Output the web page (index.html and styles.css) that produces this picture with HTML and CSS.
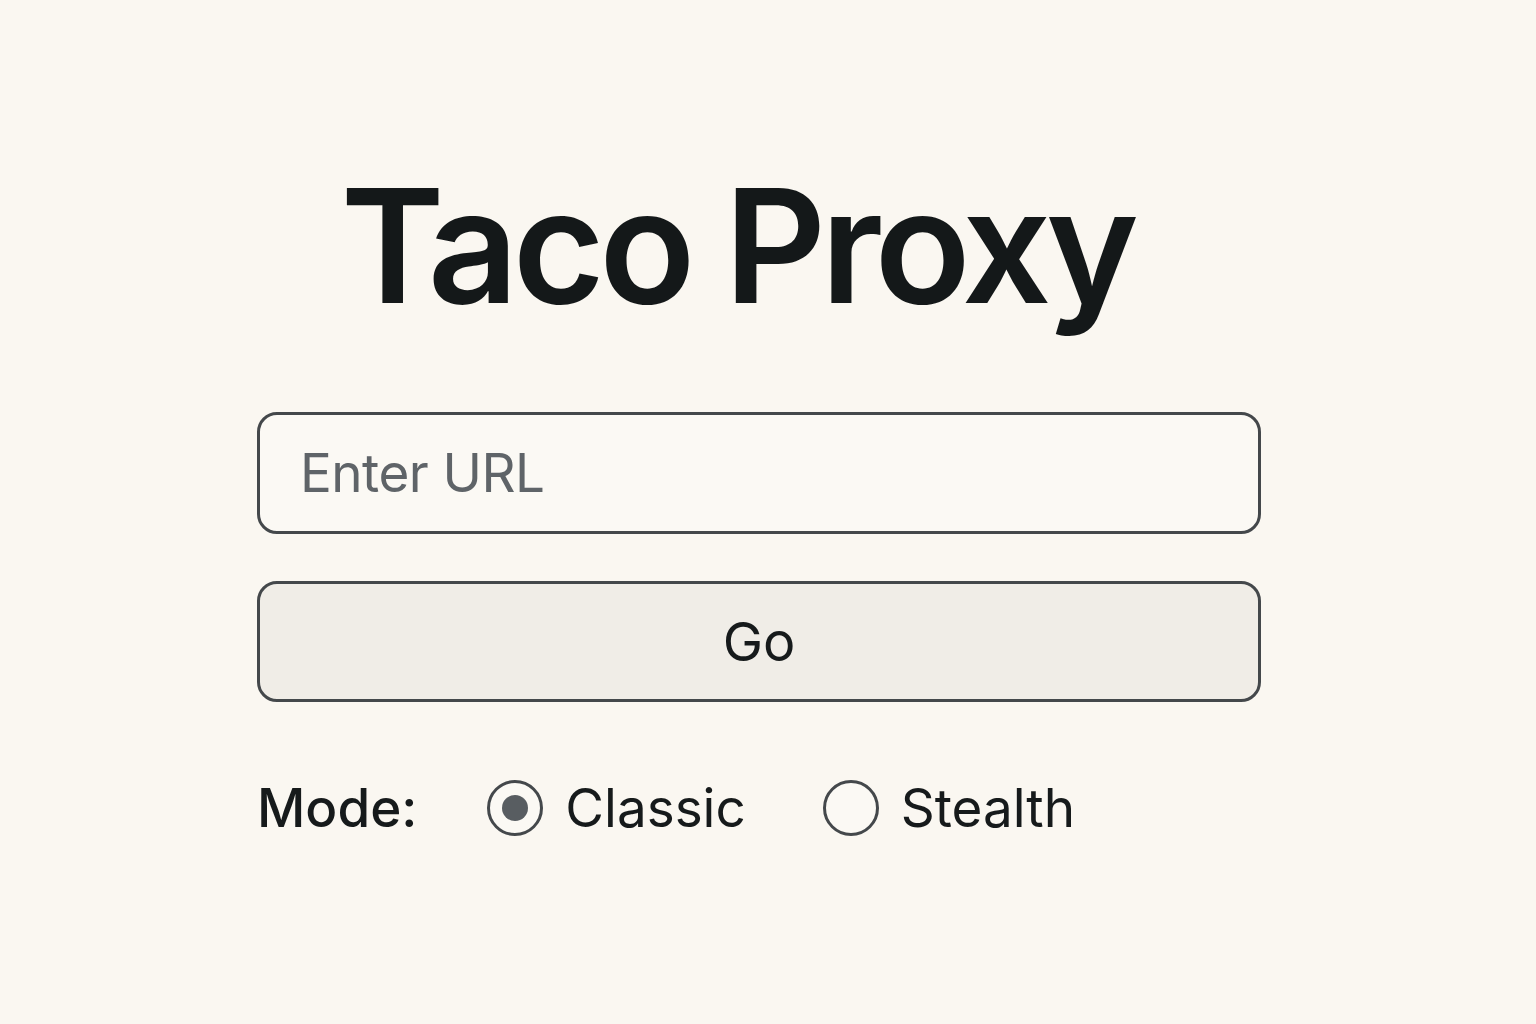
FILE: index.html
```html
<!DOCTYPE html>
<html lang="en">
<head>
<meta charset="utf-8">
<title>Taco Proxy</title>
<link rel="stylesheet" href="styles.css">
</head>
<body>
<main class="page">
  <h1 class="title">Taco Proxy</h1>
  <form class="form">
    <input class="url" type="text" placeholder="Enter URL">
    <button class="go" type="button">Go</button>
    <div class="mode">
      <span class="mode-label">Mode:</span>
      <label class="opt"><span class="radio checked"></span>Classic</label>
      <label class="opt"><span class="radio"></span>Stealth</label>
    </div>
  </form>
</main>
</body>
</html>
```
FILE: styles.css
```css
html, body {
  margin: 0;
  padding: 0;
  background: #faf7f1;
  font-family: Inter, "Noto Sans", sans-serif;
  color: #161a1b;
}
.page {
  width: 1004px;
  margin: 0 auto 0 257px;
  padding-top: 156px;
}
.title {
  margin: 0;
  padding-right: 44px;
  text-align: center;
  font-size: 158px;
  font-weight: 600;
  letter-spacing: -0.035em;
  line-height: 180px;
  color: #141819;
}
.form {
  display: flex;
  flex-direction: column;
  margin-top: 76px;
}
.url {
  box-sizing: border-box;
  height: 122px;
  border: 3px solid #44484b;
  border-radius: 20px;
  background: #fbf9f4;
  padding: 0 0 0 40px;
  font-family: Inter, sans-serif;
  font-size: 53px;
  letter-spacing: -0.01em;
  color: #5f6468;
  outline: none;
}
.url::placeholder {
  color: #5f6468;
  opacity: 1;
}
.go {
  box-sizing: border-box;
  margin-top: 47px;
  height: 121px;
  border: 3px solid #44484b;
  border-radius: 20px;
  background: #f0ede7;
  font-family: Inter, sans-serif;
  font-size: 54px;
  color: #161a1b;
  padding: 0;
}
.mode {
  display: flex;
  align-items: center;
  margin-top: 74px;
  font-size: 53px;
}
.mode-label {
  font-weight: 500;
  margin-right: 70px;
}
.opt {
  display: flex;
  align-items: center;
  margin-right: 77px;
}
.radio {
  box-sizing: border-box;
  width: 56px;
  height: 56px;
  border: 3px solid #44484b;
  border-radius: 50%;
  margin-right: 22px;
  display: flex;
  align-items: center;
  justify-content: center;
  background: #fbf9f4;
}
.radio.checked::after {
  content: "";
  width: 26px;
  height: 26px;
  border-radius: 50%;
  background: #585d61;
}
```
